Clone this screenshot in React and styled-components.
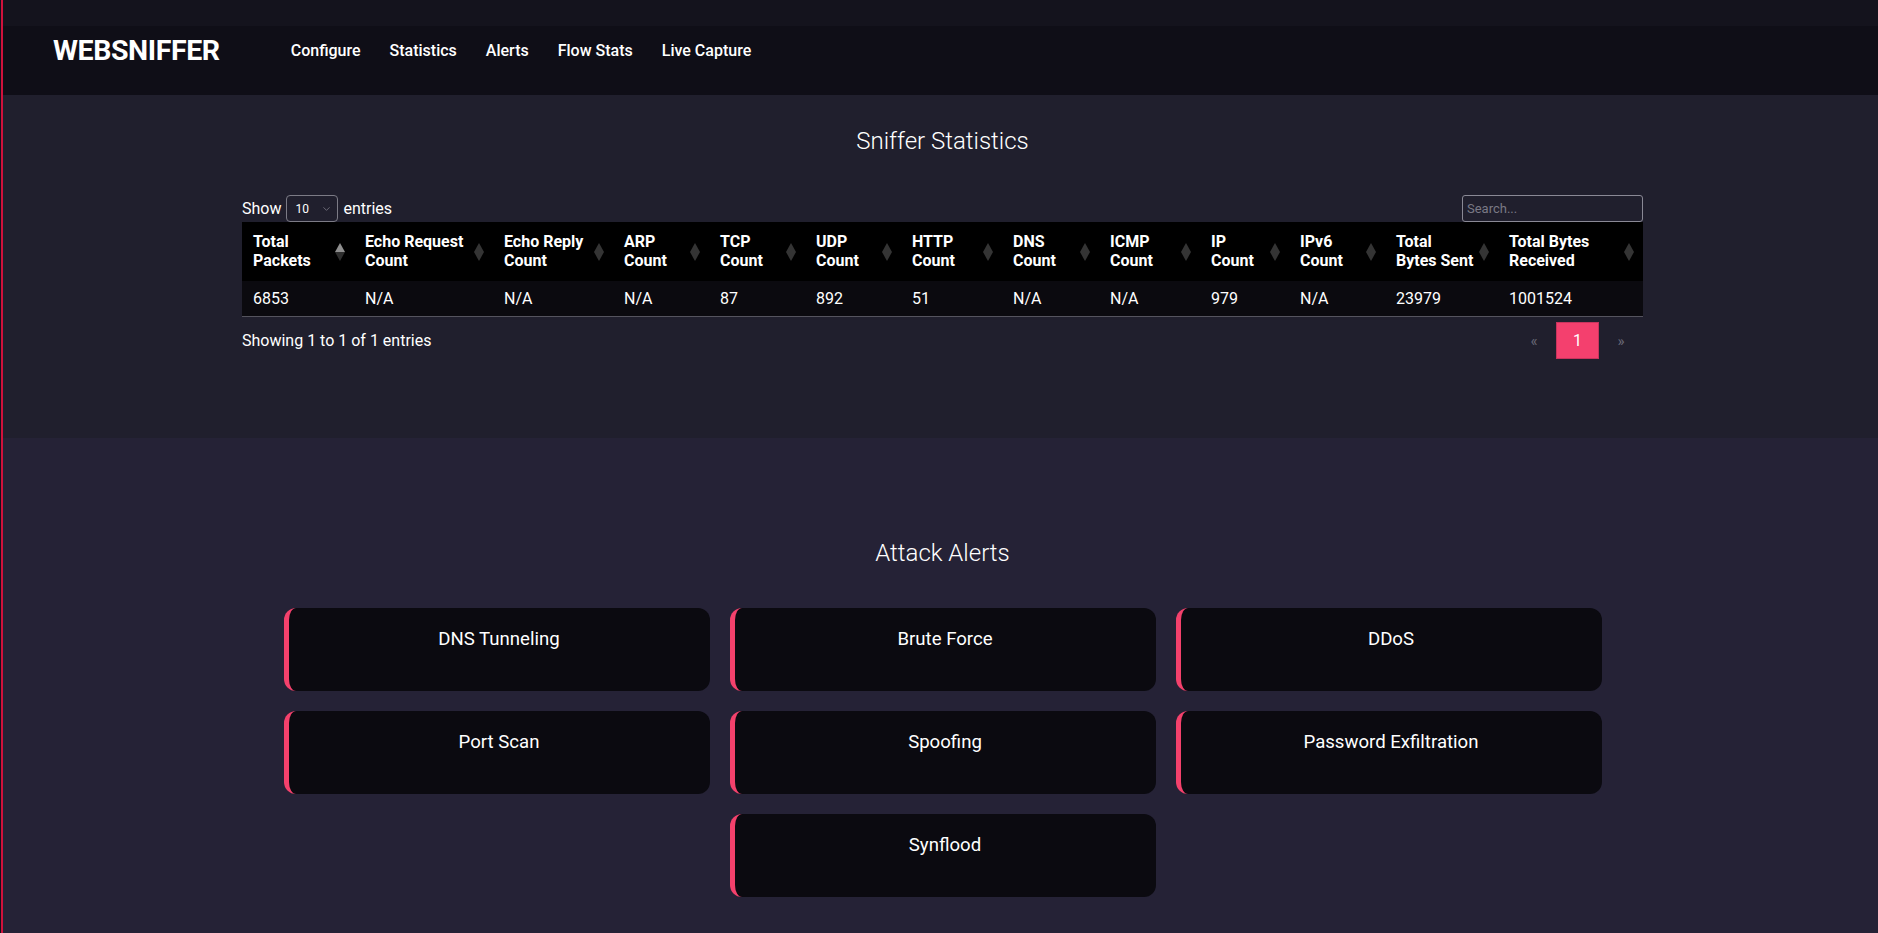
import React from "react";
import styled, { createGlobalStyle } from "styled-components";
import { ChevronDown } from "lucide-react";

const GlobalStyle = createGlobalStyle`
  html, body {
    margin: 0;
    padding: 0;
    background: #13121c;
  }
  body {
    font-family: Roboto, "Noto Sans", Arial, sans-serif;
    color: #ffffff;
    overflow: hidden;
  }
  *, *::before, *::after {
    box-sizing: border-box;
  }
`;

const Page = styled.div`
  min-height: 100vh;
  margin-left: 1px;
  border-left: 2px solid #d0123c;
  display: flex;
  flex-direction: column;
`;

const Header = styled.header`
  height: 95px;
  background: linear-gradient(#14131d 0 26px, #0f0e17 26px);
  display: flex;
  align-items: center;
  padding: 5px 0 0 50px;
`;

const Logo = styled.div`
  font-size: 28.5px;
  font-weight: 700;
  letter-spacing: -0.4px;
  margin-right: 71px;
`;

const Nav = styled.nav`
  display: flex;
  gap: 29px;
`;

const NavLink = styled.a`
  color: #ffffff;
  text-decoration: none;
  font-size: 16px;
  font-weight: 500;
`;

const StatsSection = styled.section`
  background: #201f2d;
  padding: 32px 0 79px 4px;
`;

const SectionTitle = styled.h2`
  margin: 0;
  text-align: center;
  font-size: 24px;
  font-weight: 300;
  line-height: 28px;
  color: #ffffff;
`;

const TableWrap = styled.div`
  width: 1401px;
  margin: 40px auto 0;
`;

const Controls = styled.div`
  display: flex;
  justify-content: space-between;
  align-items: center;
  height: 27px;
`;

const LengthLabel = styled.label`
  display: flex;
  align-items: center;
  gap: 5px;
  font-size: 16px;
`;

const SelectBox = styled.div`
  position: relative;
  width: 52px;
  height: 27px;
`;

const Select = styled.select`
  appearance: none;
  -webkit-appearance: none;
  width: 100%;
  height: 100%;
  background: transparent;
  border: 1px solid #7c7b86;
  border-radius: 4px;
  color: #ffffff;
  font-size: 12px;
  font-family: inherit;
  padding: 0 0 0 8px;
  outline: none;
`;

const SelectChevron = styled.span`
  position: absolute;
  right: 6px;
  top: 50%;
  transform: translateY(-50%);
  display: flex;
  color: #8a8995;
  pointer-events: none;
`;

const SearchInput = styled.input`
  width: 181px;
  height: 27px;
  background: transparent;
  border: 1px solid #8a8995;
  border-radius: 3px;
  color: #ffffff;
  font-size: 13px;
  font-family: inherit;
  padding: 0 4px;
  outline: none;
  &::placeholder {
    color: #7a7985;
  }
`;

const Table = styled.table`
  width: 1401px;
  border-collapse: collapse;
  table-layout: fixed;
`;

const Th = styled.th`
  position: relative;
  background: #000000;
  text-align: left;
  vertical-align: top;
  font-weight: 700;
  font-size: 16px;
  line-height: 19px;
  padding: 10px 22px 11px 11px;
  color: #ffffff;
`;

const SortIcon = styled.svg`
  position: absolute;
  right: 9px;
  top: 50%;
  transform: translateY(-50%);
`;

const Td = styled.td`
  background: #0b0a0f;
  font-size: 16px;
  line-height: 19px;
  padding: 8px 11px;
  border-bottom: 1px solid #55545e;
  color: #ffffff;
`;

const InfoRow = styled.div`
  display: flex;
  justify-content: space-between;
  align-items: center;
  margin-top: 5px;
`;

const InfoText = styled.div`
  font-size: 16px;
`;

const Pagination = styled.div`
  display: flex;
  align-items: center;
`;

const PageArrow = styled.span`
  width: 44px;
  text-align: center;
  color: #6a6977;
  font-size: 15px;
`;

const PageCurrent = styled.span`
  width: 43px;
  height: 37px;
  display: flex;
  align-items: center;
  justify-content: center;
  background: #f4406e;
  border: 1px solid #c8345d;
  color: #ffffff;
  font-size: 16px;
`;

const AlertsSection = styled.section`
  flex: 1;
  background: #252236;
  padding: 101px 0 37px 4px;
`;

const CardGrid = styled.div`
  width: 1318px;
  margin: 41px auto 0;
  display: flex;
  flex-wrap: wrap;
  justify-content: center;
  gap: 20px;
`;

const AlertCard = styled.div`
  width: 426px;
  height: 83px;
  background: #0b0a10;
  border-radius: 12px;
  border-left: 5px solid #f4416c;
  padding-top: 20px;
  text-align: center;
  font-size: 18.6px;
  line-height: 23px;
  color: #ffffff;
`;

const columns = [
  { w: 112, label: ["Total", "Packets"], value: "6853", active: true },
  { w: 139, label: ["Echo Request", "Count"], value: "N/A" },
  { w: 120, label: ["Echo Reply", "Count"], value: "N/A" },
  { w: 96, label: ["ARP", "Count"], value: "N/A" },
  { w: 96, label: ["TCP", "Count"], value: "87" },
  { w: 96, label: ["UDP", "Count"], value: "892" },
  { w: 101, label: ["HTTP", "Count"], value: "51" },
  { w: 97, label: ["DNS", "Count"], value: "N/A" },
  { w: 101, label: ["ICMP", "Count"], value: "N/A" },
  { w: 89, label: ["IP", "Count"], value: "979" },
  { w: 96, label: ["IPv6", "Count"], value: "N/A" },
  { w: 113, label: ["Total", "Bytes Sent"], value: "23979" },
  { w: 145, label: ["Total Bytes", "Received"], value: "1001524" },
];

const alerts = [
  "DNS Tunneling",
  "Brute Force",
  "DDoS",
  "Port Scan",
  "Spoofing",
  "Password Exfiltration",
  "Synflood",
];

function Sort({ active }) {
  return (
    <SortIcon width="10" height="18" viewBox="0 0 10 18">
      <polygon points="5,0 10,9 0,9" fill={active ? "#8f8f8f" : "#343434"} />
      <polygon points="0,9 10,9 5,18" fill={active ? "#2e2e2e" : "#343434"} />
    </SortIcon>
  );
}

export default function App() {
  return (
    <>
      <GlobalStyle />
      <Page>
        <Header>
          <Logo>WEBSNIFFER</Logo>
          <Nav>
            <NavLink href="#">Configure</NavLink>
            <NavLink href="#">Statistics</NavLink>
            <NavLink href="#">Alerts</NavLink>
            <NavLink href="#">Flow Stats</NavLink>
            <NavLink href="#">Live Capture</NavLink>
          </Nav>
        </Header>

        <StatsSection>
          <SectionTitle>Sniffer Statistics</SectionTitle>
          <TableWrap>
            <Controls>
              <LengthLabel>
                Show
                <SelectBox>
                  <Select defaultValue="10">
                    <option value="10">10</option>
                    <option value="25">25</option>
                    <option value="50">50</option>
                    <option value="100">100</option>
                  </Select>
                  <SelectChevron>
                    <ChevronDown size={11} strokeWidth={1.5} />
                  </SelectChevron>
                </SelectBox>
                entries
              </LengthLabel>
              <SearchInput placeholder="Search..." />
            </Controls>
            <Table>
              <colgroup>
                {columns.map((c, i) => (
                  <col key={i} style={{ width: c.w }} />
                ))}
              </colgroup>
              <thead>
                <tr>
                  {columns.map((c, i) => (
                    <Th key={i}>
                      {c.label[0]}
                      <br />
                      {c.label[1]}
                      <Sort active={c.active} />
                    </Th>
                  ))}
                </tr>
              </thead>
              <tbody>
                <tr>
                  {columns.map((c, i) => (
                    <Td key={i}>{c.value}</Td>
                  ))}
                </tr>
              </tbody>
            </Table>
            <InfoRow>
              <InfoText>Showing 1 to 1 of 1 entries</InfoText>
              <Pagination>
                <PageArrow>«</PageArrow>
                <PageCurrent>1</PageCurrent>
                <PageArrow>»</PageArrow>
              </Pagination>
            </InfoRow>
          </TableWrap>
        </StatsSection>

        <AlertsSection>
          <SectionTitle>Attack Alerts</SectionTitle>
          <CardGrid>
            {alerts.map((a) => (
              <AlertCard key={a}>{a}</AlertCard>
            ))}
          </CardGrid>
        </AlertsSection>
      </Page>
    </>
  );
}
